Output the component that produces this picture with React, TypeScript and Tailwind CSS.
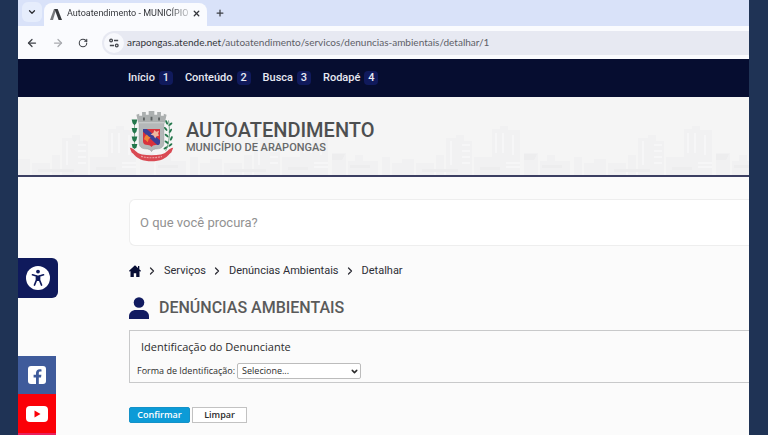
import { ArrowLeft, ArrowRight, ChevronDown, ChevronRight, Plus, RotateCw, X } from "lucide-react";

const atalhos = [
  { nome: "Início", tecla: 1 },
  { nome: "Conteúdo", tecla: 2 },
  { nome: "Busca", tecla: 3 },
  { nome: "Rodapé", tecla: 4 },
];

const caminho = ["Serviços", "Denúncias Ambientais", "Detalhar"];

function Navegador() {
  return (
    <div>
      {/* Abas */}
      <div className="flex h-[26px] items-end bg-[#d9e2f9]">
        <button aria-label="Pesquisar guias" className="mb-1 ml-1 flex h-5 w-5 items-center justify-center rounded-md bg-[#e6edfc] text-[#2b2d33]">
          <ChevronDown size={10} strokeWidth={3} />
        </button>
        <div className="ml-0.5 flex h-[23px] w-[163px] items-center rounded-t-lg bg-[#fafbfe] px-1.5 pb-0.5 text-[#34363b]">
          <svg viewBox="0 0 12 12" className="h-3 w-3 shrink-0">
            <path d="M0 12 4 1h2.200L3 12z" fill="#77797c" />
            <path d="M4.500 1h3.200L12 12H8.600z" fill="#36383b" />
          </svg>
          <span className="ml-[5px] text-[9px] whitespace-nowrap [mask-image:linear-gradient(to_right,black_85%,#0004)]">
            Autoatendimento - MUNICÍPIO
          </span>
          <button aria-label="Fechar guia" className="ml-auto">
            <X size={9} strokeWidth={3.5} />
          </button>
        </div>
        <button aria-label="Nova guia" className="mb-2 ml-2 text-[#3c3f46]">
          <Plus size={10} strokeWidth={3} />
        </button>
      </div>
      {/* Endereço */}
      <div className="flex h-[33px] items-center bg-[#fafbfe] pl-2 text-[#3f4248]">
        <button aria-label="Voltar">
          <ArrowLeft size={12} strokeWidth={2.5} />
        </button>
        <button aria-label="Avançar" className="ml-3.5 text-[#a9abb0]">
          <ArrowRight size={12} strokeWidth={2.5} />
        </button>
        <button aria-label="Recarregar" className="ml-3.5">
          <RotateCw size={10} strokeWidth={2.5} />
        </button>
        <div className="ml-3.5 flex h-6 flex-1 items-center rounded-l-full bg-[#e7e9f2] pl-0.5">
          <span className="flex h-5 w-5 items-center justify-center rounded-full bg-[#f7f8fc]">
            <svg viewBox="0 0 12 12" className="h-2.5 w-2.5" fill="none" stroke="#45484e" strokeWidth="1.600">
              <circle cx="2.500" cy="3" r="1.600" />
              <path d="M6 3h5M1 9h5" />
              <circle cx="9.300" cy="9" r="1.600" />
            </svg>
          </span>
          <p className="ml-[3px] font-[Lato,sans-serif] text-[10px] text-[#5d6067]">
            <span className="text-[#33353a]">arapongas.atende.net</span>/autoatendimento/servicos/denuncias-ambientais/detalhar/1
          </p>
        </div>
      </div>
    </div>
  );
}

function Brasao() {
  return (
    <svg viewBox="0 0 46 54" className="h-[51px] w-[45px] shrink-0" role="img" aria-label="Brasão de Arapongas">
      {/* Ramos */}
      <path d="M5 10v30" stroke="#8fa893" strokeWidth="1" />
      <g fill="#23764b">
        <path d="M2 9h6l-1 4-2 2-2-2zM2 18h6l-1 4-2 2-2-2zM2 27h6l-1 4-2 2-2-2zM2 35h6l-1 4-2 1-2-1z" />
        <ellipse cx="39" cy="12" rx="1.100" ry="2.600" transform="rotate(-25 39 12)" />
        <ellipse cx="43" cy="14" rx="1.100" ry="2.600" transform="rotate(50 43 14)" />
        <ellipse cx="38" cy="19" rx="1.100" ry="2.600" transform="rotate(-40 38 19)" />
        <ellipse cx="43" cy="21" rx="1.100" ry="2.600" transform="rotate(35 43 21)" />
        <ellipse cx="39" cy="26" rx="1.100" ry="2.600" transform="rotate(-50 39 26)" />
        <ellipse cx="44" cy="29" rx="1.100" ry="2.600" transform="rotate(25 44 29)" />
        <ellipse cx="39" cy="33" rx="1.100" ry="2.600" transform="rotate(-55 39 33)" />
        <ellipse cx="43" cy="36" rx="1.100" ry="2.600" transform="rotate(50 43 36)" />
        <ellipse cx="38" cy="39" rx="1.100" ry="2.600" transform="rotate(60 38 39)" />
      </g>
      <path d="M38 42c4-8 5-20 3-32" fill="none" stroke="#4c8d68" strokeWidth="0.800" />
      {/* Escudo */}
      <path d="M10 12h26v22c0 4-3 6-7 6-3 0-5 1-6 3-1-2-3-3-6-3-4 0-7-2-7-6z" fill="#b4b8b9" stroke="#9a9fa0" strokeWidth="0.700" />
      {/* Coroa mural */}
      <path d="M9 13 7 4l3-1v2h3V1h4v3h3V0h6v4h3V1h4v4h3V3l3 1-2 9z" fill="#abafaf" />
      <path d="M14 7h2v3h-2zM22 6h2v4h-2zM30 7h2v3h-2z" fill="#5f6464" />
      <path d="M9 12.500h28" stroke="#d4d7d7" />
      <path d="M14 19h18v13c0 3-2 4-5 4-2 0-3 1-4 2-1-1-2-2-4-2-3 0-5-1-5-4z" fill="#d9323c" />
      <path d="M14 19h4l14 12v2c0 2-1 3-3 3L14 22z" fill="#3c3f96" />
      <path d="m26 20 2 2 3-1-1 3 1 2-3 1-1 2-2-3-3-1 3-2z" fill="#f0b7a0" />
      <path d="m16 27 2-2 2 2 2 1-2 2-1 3-2-2-2-1z" fill="#f08437" />
      {/* Faixa */}
      <path d="M0 39c5 0 6 6 13 7 6 1 14 1 20 0 7-1 8-7 13-7l-2 5c-3 2-4 5-9 7-7 3-17 3-24 0-5-2-6-5-9-7z" fill="#d94a53" />
      <path d="M12 48c7 2 15 2 22 0" fill="none" stroke="#eda3a6" strokeWidth="1.200" strokeDasharray="2 1" />
    </svg>
  );
}

function Skyline() {
  return (
    <svg className="absolute inset-x-0 bottom-0 h-[54px] w-full" aria-hidden="true">
      <defs>
        <pattern id="predios" width="192" height="54" patternUnits="userSpaceOnUse">
          <g fill="#f1f1f2">
            <path d="M44 17h10v-3h8v6h8v34H44z" />
            <path d="M90 8h8V5h8v4h12v45H90z" />
            <path d="M34 34h8v20h-8zM72 36h18v18H72zM122 32h14v22h-14zM138 40h30v14h-30zM0 38h12v16H0zM14 42h18v12H14z" />
            <path d="M145 34h8v8h-8zM172 36h8v18h-8zM182 42h10v12h-10z" />
          </g>
          <g fill="none" stroke="#f6f6f7" strokeWidth="2">
            <path d="M49 20v24M94 12v20M101 12v20M111 14v20" />
            <path d="M60 24h8M60 30h8M60 36h8M60 42h8M104 42h14M104 46h14" />
          </g>
          <path d="M122 33h13l-3 6h-10zM20 48h36v3H20zM78 46h20v3H78zM140 44h20v3h-20z" fill="#ededee" />
        </pattern>
      </defs>
      <rect width="100%" height="54" fill="url(#predios)" />
    </svg>
  );
}

function BarraLateral() {
  return (
    <aside className="absolute top-[81px] left-0">
      <button aria-label="Acessibilidade" className="flex h-10 w-10 items-center justify-center rounded-r-md bg-[#0f1a5c]">
        <svg viewBox="0 0 24 24" className="h-6 w-6">
          <circle cx="12" cy="12" r="12" fill="#fff" />
          <circle cx="12" cy="5.600" r="1.900" fill="#0f1a5c" />
          <path d="M6.500 8.800 10.500 10v4L8.500 19M17.500 8.800 13.500 10v4l2 5" fill="none" stroke="#0f1a5c" strokeWidth="1.700" strokeLinecap="round" strokeLinejoin="round" />
          <path d="M10 9.500h4V15h-4z" fill="#0f1a5c" />
        </svg>
      </button>
      <nav aria-label="Redes sociais" className="mt-[58px] w-[38px]">
        <a href="#facebook" aria-label="Facebook" className="flex h-[38px] items-center justify-center bg-[#3f5b9b]">
          <svg viewBox="0 0 18 18" className="h-[18px] w-[18px]">
            <rect width="18" height="18" rx="3" fill="#fff" />
            <path d="M8 18v-6.500H5.600V8.800H8V7c0-2.500 1.500-3.800 3.700-3.800.9 0 1.800.2 1.800.2v2.200h-1.200c-1.100 0-1.500.7-1.500 1.400v1.800h2.600l-.4 2.700h-2.200V18z" fill="#3f5b9b" />
          </svg>
        </a>
        <a href="#youtube" aria-label="YouTube" className="flex h-[39px] items-center justify-center bg-[#fb0007]">
          <svg viewBox="0 0 22 16" className="h-4 w-[22px]">
            <rect width="22" height="16" rx="4" fill="#fff" />
            <path d="M8.500 4.500v7l6-3.500z" fill="#fb0007" />
          </svg>
        </a>
        <a href="#instagram" aria-label="Instagram" className="block h-10 bg-[#e8215f]" />
      </nav>
    </aside>
  );
}

export default function App() {
  return (
    <div className="flex h-screen bg-[#1f3355] pr-[19px] pl-[18px] font-[Roboto,sans-serif]">
      <div className="flex min-w-0 flex-1 flex-col overflow-hidden bg-[#fbfbfb]">
        <Navegador />

        <nav aria-label="Atalhos" className="flex h-[38px] shrink-0 items-center gap-3 bg-[#060d30] pl-[110px] text-[11px] font-medium text-[#e6e8f2]">
          {atalhos.map((a) => (
            <a key={a.tecla} href={`#${a.nome}`} className="flex items-center gap-1">
              {a.nome}
              <span className="flex h-3.5 w-3.5 items-center justify-center rounded-sm bg-[#101a5c]">{a.tecla}</span>
            </a>
          ))}
        </nav>

        <header className="relative flex h-20 shrink-0 items-center border-b-2 border-[#3c3f62] bg-[#f5f5f5] pl-[111px]">
          <Skyline />
          <div className="relative flex items-center gap-3">
            <Brasao />
            <div className="pt-0.5 text-[#4d4f50]">
              <h1 className="text-xl leading-5 font-medium">AUTOATENDIMENTO</h1>
              <p className="mt-px text-[11px] leading-3.5 font-medium text-[#686a6b]">MUNICÍPIO DE ARAPONGAS</p>
            </div>
          </div>
        </header>

        <main className="relative flex-1 overflow-hidden pt-[22px] pl-[111px]">
          <BarraLateral />

          <input
            type="search"
            aria-label="Busca"
            placeholder="O que você procura?"
            className="block h-[47px] w-full rounded-l-md border border-r-0 border-[#eeeeee] bg-white pl-2.5 text-[13px] placeholder:text-[#929292]"
          />

          <nav aria-label="Você está em" className="mt-[17px] flex h-4 items-center text-[11px] text-[#2d2e36]">
            <a href="#inicio" aria-label="Página inicial">
              <svg viewBox="0 0 12 12" className="h-3 w-3" fill="#080e35">
                <path d="M6 .3 0 5.800l.8.9.7-.6V12h3.300V8.300h2.400V12h3.300V6.100l.7.6.8-.9-1.700-1.600V1H9v1.900z" />
              </svg>
            </a>
            {caminho.map((item) => (
              <span key={item} className="flex items-center">
                <ChevronRight size={12} strokeWidth={2.5} className="mr-1.5 ml-[5px]" />
                <a href="#servicos">{item}</a>
              </span>
            ))}
          </nav>

          <h2 className="mt-[17px] flex h-6 items-center gap-2.5 text-base font-medium text-[#5a5a5a]">
            <svg viewBox="0 0 20 22" className="h-[22px] w-5" fill="#111b60">
              <circle cx="10" cy="5.500" r="5.300" />
              <path d="M0 22v-2.500C0 15.500 3 13 7 13h6c4 0 7 2.500 7 6.500V22z" />
            </svg>
            DENÚNCIAS AMBIENTAIS
          </h2>

          <form className="font-['Open_Sans',sans-serif] text-[#2c2c2c]">
            <section className="mt-2.5 h-[53px] border border-r-0 border-[#c8c9ca] pt-2 pl-[7px]">
              <h3 className="pl-1 text-[11px] leading-4 font-medium">Identificação do Denunciante</h3>
              <div className="mt-2 flex items-center gap-0.5 text-[9px]">
                <label htmlFor="forma">Forma de Identificação:</label>
                <div className="relative">
                  <select id="forma" className="block h-4 w-[124px] appearance-none rounded-xs border border-[#bcbcbc] bg-white pl-1 leading-3">
                    <option>Selecione...</option>
                  </select>
                  <ChevronDown size={9} strokeWidth={4} className="pointer-events-none absolute top-1 right-0.5" />
                </div>
              </div>
            </section>
            <div className="mt-6 flex gap-0.5 text-[9px] leading-3 font-semibold">
              <button type="submit" className="h-4 w-[61px] rounded-xs border border-[#1492c8] bg-[#0c9bd7] text-white">
                Confirmar
              </button>
              <button type="reset" className="h-4 w-[55px] border border-[#c2c2c2] bg-white">
                Limpar
              </button>
            </div>
          </form>
        </main>
      </div>
    </div>
  );
}
